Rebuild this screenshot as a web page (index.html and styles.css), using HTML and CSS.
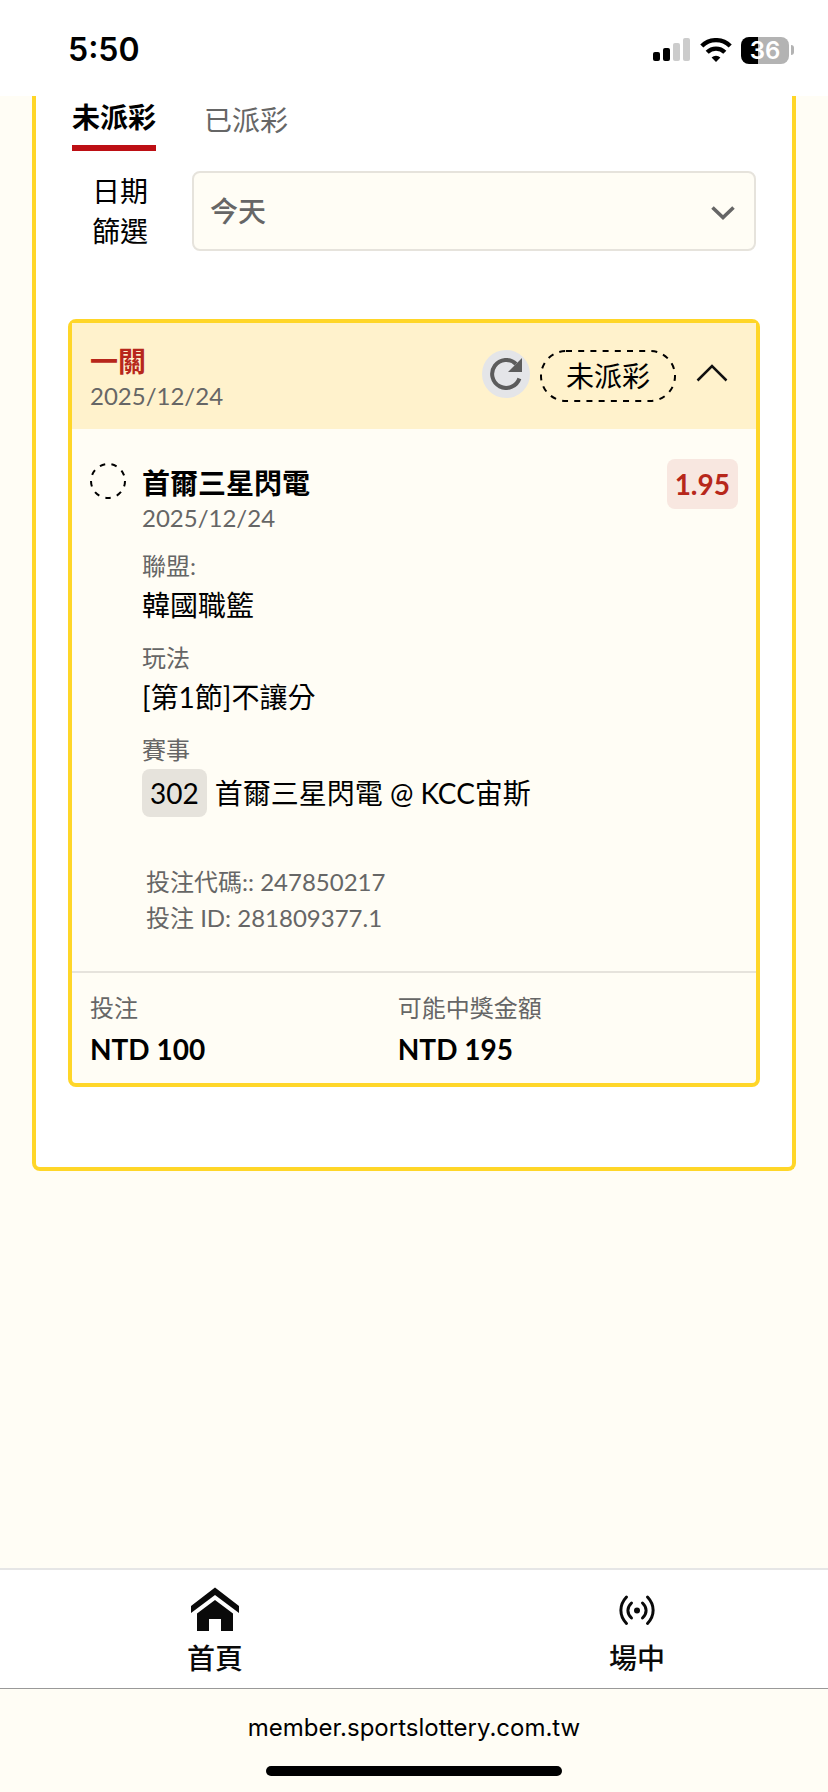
FILE: index.html
```html
<!DOCTYPE html>
<html lang="zh-Hant">
<head>
    <meta charset="UTF-8">
    <meta name="viewport" content="width=device-width, initial-scale=1.0">
    <title>投注紀錄</title>
    <link rel="stylesheet" href="styles.css">
</head>
<body>
    <header class="status-bar">
        <span class="time">5:50</span>
        <div class="status-icons">
            <svg class="signal" width="37" height="24" viewBox="0 0 37 24">
                <rect x="0" y="14" width="7" height="9" rx="2"/>
                <rect x="10" y="10" width="7" height="13" rx="2"/>
                <rect x="20" y="5" width="7" height="18" rx="2" fill="#ccc"/>
                <rect x="30" y="0" width="7" height="23" rx="2" fill="#ccc"/>
            </svg>
            <svg class="wifi" width="32" height="24" viewBox="0 0 32 24">
                <path d="M1.8 8a20.2 20.2 0 0 1 28.4 0" fill="none" stroke="#000" stroke-width="4.4"/>
                <path d="M7.2 14.2a12.5 12.5 0 0 1 17.6 0" fill="none" stroke="#000" stroke-width="4.4"/>
                <path d="M11.6 19.6a6.4 6.4 0 0 1 8.8 0L16 24z"/>
            </svg>
            <div class="battery">
                <span class="battery-body">36</span>
                <span class="battery-tip"></span>
            </div>
        </div>
    </header>

    <main class="content">
        <section class="panel">
            <div class="tabs">
                <button class="tab active" type="button">未派彩</button>
                <button class="tab" type="button">已派彩</button>
            </div>

            <div class="filter">
                <label for="dateFilter">日期篩選</label>
                <div class="select">
                    <select id="dateFilter">
                        <option>今天</option>
                    </select>
                    <svg class="select-arrow" width="24" height="14" viewBox="0 0 24 14">
                        <path d="M1.5 1.5L12 11.5L22.5 1.5" fill="none" stroke="#666" stroke-width="3.6"/>
                    </svg>
                </div>
            </div>

            <article class="ticket">
                <div class="ticket-header">
                    <div>
                        <h2 class="ticket-type">一關</h2>
                        <p class="date">2025/12/24</p>
                    </div>
                    <div class="ticket-actions">
                        <button class="refresh" type="button" aria-label="重新整理">
                            <svg width="32" height="32" viewBox="0 0 32 32">
                                <path d="M26 6A14 14 0 1 0 29.4 20.5" fill="none" stroke="#5c5c5c" stroke-width="4"/>
                                <path d="M32 0v14H18z" fill="#5c5c5c"/>
                            </svg>
                        </button>
                        <span class="status">
                            <svg class="status-outline" width="136" height="52" viewBox="0 0 136 52">
                                <rect x="1" y="1" width="134" height="50" rx="25" fill="none" stroke="#000" stroke-width="2" stroke-dasharray="6 6.2"/>
                            </svg>
                            未派彩
                        </span>
                        <button class="toggle" type="button" aria-label="收合">
                            <svg width="32" height="18" viewBox="0 0 32 18">
                                <path d="M1.5 16.5L16 2L30.500 16.5" fill="none" stroke="#111" stroke-width="2.5"/>
                            </svg>
                        </button>
                    </div>
                </div>

                <div class="ticket-body">
                    <svg class="result-mark" width="36" height="36" viewBox="0 0 36 36">
                        <circle cx="18" cy="18" r="17" fill="none" stroke="#000" stroke-width="2" stroke-dasharray="5.5 6.37"/>
                    </svg>
                    <div class="selection">
                        <h3 class="team">首爾三星閃電</h3>
                        <p class="date">2025/12/24</p>
                        <dl class="details">
                            <dt>聯盟:</dt>
                            <dd>韓國職籃</dd>
                            <dt>玩法</dt>
                            <dd>[第1節]不讓分</dd>
                            <dt>賽事</dt>
                            <dd class="match"><span class="match-no">302</span>首爾三星閃電 @ KCC宙斯</dd>
                        </dl>
                        <div class="codes">
                            <p>投注代碼:: 247850217</p>
                            <p>投注 ID: 281809377.1</p>
                        </div>
                    </div>
                    <span class="odds">1.95</span>
                </div>

                <dl class="ticket-footer">
                    <div>
                        <dt>投注</dt>
                        <dd>NTD 100</dd>
                    </div>
                    <div>
                        <dt>可能中獎金額</dt>
                        <dd>NTD 195</dd>
                    </div>
                </dl>
            </article>
        </section>
    </main>

    <nav class="bottom-nav">
        <a class="nav-item" href="#">
            <svg width="48" height="48" viewBox="0 0 48 48">
                <path d="M24 1.5L48 20v7L24 9L0 27v-7z" fill="#0a0a0a"/>
                <path d="M24 14L42 27.5V45H30V33H18v12H6V27.5z" fill="#0a0a0a"/>
            </svg>
            首頁
        </a>
        <a class="nav-item" href="#">
            <svg width="48" height="48" viewBox="0 0 48 48" fill="none" stroke="#0a0a0a" stroke-width="3" stroke-linecap="round">
                <path d="M13.5 11c-7.500 8-7.500 18.500 0 26.500M34.500 11c7.500 8 7.500 18.500 0 26.500"/>
                <path d="M18.500 17c-4.800 4.500-4.800 10.500 0 15M29.500 17c4.800 4.500 4.800 10.500 0 15"/>
                <circle cx="24" cy="24.500" r="3" fill="#0a0a0a" stroke="none"/>
            </svg>
            場中
        </a>
    </nav>

    <footer class="browser-bar">
        <span class="url">member.sportslottery.com.tw</span>
        <div class="home-indicator"></div>
    </footer>
</body>
</html>
```
FILE: styles.css
```css
* {
    box-sizing: border-box;
    margin: 0;
    padding: 0;
}

body {
    display: flex;
    flex-direction: column;
    min-height: 100vh;
    font-family: Lato, "Noto Sans CJK TC", sans-serif;
    font-size: 28px;
    line-height: 40px;
    color: #000;
    background: #fffdf5;
}

button,
select {
    font: inherit;
    color: inherit;
    background: none;
    border: none;
    cursor: pointer;
}

svg {
    display: block;
}

/* Status bar */
.status-bar {
    display: flex;
    justify-content: space-between;
    height: 96px;
    padding: 30px 34px 0 68px;
    font-family: Inter, sans-serif;
    background: #fff;
}

.time {
    font-size: 32px;
    font-weight: 600;
}

.status-icons {
    display: flex;
    align-items: center;
    height: 40px;
}

.wifi {
    margin: 0 9px 0 10px;
}

.battery {
    display: flex;
    align-items: center;
    gap: 2px;
}

.battery-body {
    width: 48px;
    height: 27px;
    border-radius: 8px;
    font-size: 24px;
    font-weight: 600;
    line-height: 27px;
    text-align: center;
    color: #fff;
    background: linear-gradient(to right, #000 17px, #b3b3b3 17px);
}

.battery-tip {
    width: 3px;
    height: 10px;
    border-radius: 0 4px 4px 0;
    background: #b3b3b3;
}

/* Panel */
.content {
    flex: 1;
    padding: 0 32px;
}

.panel {
    padding: 0 32px 80px;
    border: 4px solid #ffd628;
    border-top: none;
    border-radius: 0 0 8px 8px;
    background: #fff;
}

.tabs {
    display: flex;
    align-items: flex-end;
    gap: 48px;
    padding: 0 4px;
}

.tab {
    padding-bottom: 10px;
    line-height: 42px;
    color: #666;
}

.tab.active {
    padding-bottom: 7px;
    border-bottom: 6px solid #bd0f14;
    font-weight: 700;
    color: #000;
}

.filter {
    display: flex;
    gap: 44px;
    margin-top: 20px;
    padding: 0 4px;
}

.filter label {
    width: 76px;
    text-align: right;
}

.select {
    position: relative;
    flex: 1;
}

.select select {
    appearance: none;
    width: 100%;
    height: 80px;
    padding: 0 16px;
    border: 2px solid #e6e3dc;
    border-radius: 8px;
    font-weight: 500;
    color: #666;
    background: #fffdf5;
}

.select-arrow {
    position: absolute;
    top: 35px;
    right: 21px;
    pointer-events: none;
}

/* Ticket */
.ticket {
    margin-top: 68px;
    border: 4px solid #ffd628;
    border-radius: 8px;
    background: #fffdf5;
}

.ticket-header {
    display: flex;
    justify-content: space-between;
    padding: 20px 18px 16px;
    background: #fff2cc;
}

.ticket-type {
    font-size: 28px;
    font-weight: 700;
    line-height: 36px;
    color: #b7271b;
}

.date {
    font-size: 24px;
    line-height: 34px;
    color: #666;
}

.ticket-actions {
    display: flex;
    align-items: flex-start;
    gap: 10px;
    padding-top: 7px;
}

.refresh {
    display: grid;
    place-items: center;
    width: 48px;
    height: 48px;
    border-radius: 50%;
    background: #e4e5e8;
}

.status {
    position: relative;
    width: 136px;
    height: 52px;
    line-height: 52px;
    text-align: center;
}

.status-outline {
    position: absolute;
    top: 0;
    left: 0;
}

.toggle {
    display: grid;
    place-items: center;
    width: 52px;
    height: 46px;
}

.ticket-body {
    display: flex;
    align-items: flex-start;
    gap: 16px;
    padding: 30px 18px 35px;
}

.result-mark {
    margin-top: 4px;
}

.selection {
    flex: 1;
    padding-top: 6px;
}

.team {
    font-size: 28px;
    font-weight: 700;
    line-height: 36px;
}

.details {
    margin-top: 14px;
}

.details dt,
.ticket-footer dt {
    font-size: 24px;
    line-height: 34px;
    color: #666;
}

.details dd {
    margin-top: 2px;
}

.details dd + dt {
    margin-top: 16px;
}

.match {
    display: flex;
    gap: 8px;
    line-height: 48px;
}

.match-no {
    padding: 0 8px;
    border-radius: 8px;
    background: #e6e3dc;
}

.codes {
    margin: 47px 0 0 4px;
    font-size: 24px;
    line-height: 36px;
    color: #666;
}

.odds {
    padding: 0 8px;
    border-radius: 8px;
    font-weight: 700;
    line-height: 50px;
    color: #b7271b;
    background: #f8e7e0;
}

.ticket-footer {
    display: grid;
    grid-template-columns: 19fr 21fr;
    padding: 18px 18px 14px;
    border-top: 2px solid #e6e3dc;
}

.ticket-footer dd {
    margin-top: 4px;
    font-weight: 700;
}

/* Bottom navigation */
.bottom-nav {
    display: flex;
    justify-content: space-between;
    padding: 16px 163px 10px 187px;
    border-top: 2px solid #e6e6e6;
    border-bottom: 1px solid #999;
    background: #fff;
}

.nav-item {
    display: flex;
    flex-direction: column;
    align-items: center;
    gap: 4px;
    font-weight: 500;
    color: #0a0a0a;
    text-decoration: none;
}

/* Browser bar */
.browser-bar {
    display: flex;
    flex-direction: column;
    align-items: center;
    gap: 20px;
    padding: 21px 0 16px;
    font-family: Inter, sans-serif;
    font-size: 24px;
    line-height: 36px;
}

.home-indicator {
    width: 296px;
    height: 10px;
    border-radius: 5px;
    background: #000;
}
```
